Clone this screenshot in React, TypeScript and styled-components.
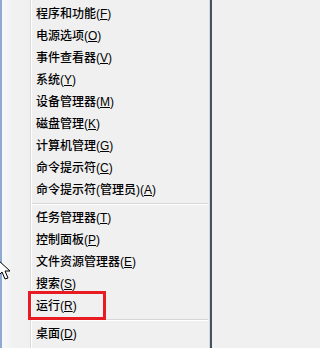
import styled, { createGlobalStyle } from 'styled-components';

type Item = { label: string; key: string };

const groups: Item[][] = [
  [
    { label: '程序和功能', key: 'F' },
    { label: '电源选项', key: 'O' },
    { label: '事件查看器', key: 'V' },
    { label: '系统', key: 'Y' },
    { label: '设备管理器', key: 'M' },
    { label: '磁盘管理', key: 'K' },
    { label: '计算机管理', key: 'G' },
    { label: '命令提示符', key: 'C' },
    { label: '命令提示符(管理员)', key: 'A' },
  ],
  [
    { label: '任务管理器', key: 'T' },
    { label: '控制面板', key: 'P' },
    { label: '文件资源管理器', key: 'E' },
    { label: '搜索', key: 'S' },
    { label: '运行', key: 'R' },
  ],
  [{ label: '桌面', key: 'D' }],
];

function App() {
  return (
    <>
      <GlobalStyle />
      <Screen>
        <Gutter />
        <Menu>
          {groups.map((group, gi) => (
            <Group key={gi}>
              {gi > 0 && <Separator />}
              {group.map((item) => (
                <Row key={item.key}>
                  {item.label}(<Key>{item.key}</Key>)
                </Row>
              ))}
            </Group>
          ))}
        </Menu>
        <Highlight />
        <Cursor width="14" height="22" viewBox="0 0 14 22">
          <path d="M1 1 L1 17 L5 13 L8 20 L11 19 L8 12 L13 12 Z" fill="#fff" stroke="#000" strokeWidth="1" />
        </Cursor>
      </Screen>
    </>
  );
}

export default App;

const GlobalStyle = createGlobalStyle`
  html, body {
    margin: 0;
    padding: 0;
    background: #f0f0f0;
  }
`;

const Screen = styled.div`
  position: relative;
  display: flex;
  width: 212px;
  height: 348px;
  overflow: hidden;
  font-family: 'Liberation Sans', 'Noto Sans CJK SC', sans-serif;
`;

const Gutter = styled.div`
  width: 28px;
  flex: none;
  border-left: 2px solid #8eaad0;
  border-right: 1px solid #d9d9d9;
  box-shadow: 1px 0 0 #ffffff;
  background: linear-gradient(to right, #f6f8fb 0px, #f1f1f1 10px, #f0f0f0 100%);
`;

const Menu = styled.div`
  flex: 1;
  margin-left: 1px;
  padding-top: 3px;
  background: #f0f0f0;
  border-right: 2px solid #46525e;
  box-shadow: inset -1px 0 0 #d4d8dc;
`;

const Group = styled.div`
  display: flex;
  flex-direction: column;
`;

const Separator = styled.div`
  height: 0;
  margin: 2px 2px 2px 0;
  border-top: 1px solid #d7d7d7;
  border-bottom: 1px solid #ffffff;
`;

const Row = styled.div`
  height: 22px;
  line-height: 22px;
  padding-left: 4px;
  font-size: 12px;
  font-weight: 500;
  color: #000000;
  white-space: nowrap;
`;

const Key = styled.span`
  text-decoration: underline;
  text-underline-offset: 1px;
`;

const Highlight = styled.div`
  position: absolute;
  left: 28px;
  top: 291px;
  width: 72px;
  height: 23px;
  border: 3px solid #e81a22;
  pointer-events: none;
`;

const Cursor = styled.svg`
  position: absolute;
  left: -3px;
  top: 259px;
`;
